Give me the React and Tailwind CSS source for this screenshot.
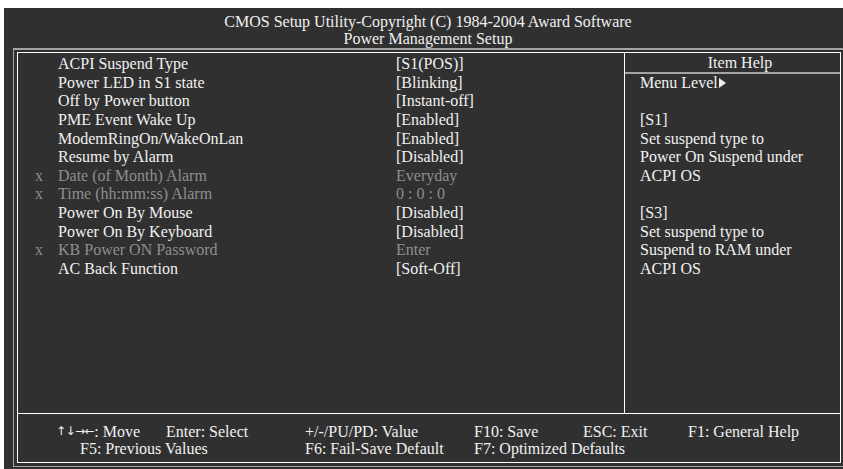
import React from 'react';

const items = [
  { label: 'ACPI Suspend Type', value: '[S1(POS)]' },
  { label: 'Power LED in S1 state', value: '[Blinking]' },
  { label: 'Off by Power button', value: '[Instant-off]' },
  { label: 'PME Event Wake Up', value: '[Enabled]' },
  { label: 'ModemRingOn/WakeOnLan', value: '[Enabled]' },
  { label: 'Resume by Alarm', value: '[Disabled]' },
  { label: 'Date (of Month) Alarm', value: 'Everyday', off: true },
  { label: 'Time (hh:mm:ss) Alarm', value: '0 : 0 : 0', off: true },
  { label: 'Power On By Mouse', value: '[Disabled]' },
  { label: 'Power On By Keyboard', value: '[Disabled]' },
  { label: 'KB Power ON Password', value: 'Enter', off: true },
  { label: 'AC Back Function', value: '[Soft-Off]' },
];

const helpLines = [
  'menu',
  '',
  '[S1]',
  'Set suspend type to',
  'Power On Suspend under',
  'ACPI OS',
  '',
  '[S3]',
  'Set suspend type to',
  'Suspend to RAM under',
  'ACPI OS',
];

const SettingRow = ({ item }) => (
  <div className={`flex h-[18.65px] leading-[18.65px] whitespace-nowrap ${item.off ? 'text-[#8e8e8e]' : ''}`}>
    <span className="w-[40px] pl-[17px]">{item.off ? 'x' : ''}</span>
    <span className="w-[338px]">{item.label}</span>
    <span>{item.value}</span>
  </div>
);

const App = () => {
  return (
    <div className="w-[843px] h-[469px] bg-white overflow-hidden font-['Liberation_Serif','Times_New_Roman',serif] text-[16px]">
      <div className="ml-[4px] mt-[8px] w-[841px] h-[461px] bg-[#303030] text-[#f0f0f0]">
        {/* title */}
        <div className="h-[40px] pt-[5px] pl-[7px] text-center leading-[17px]">
          <div>CMOS Setup Utility-Copyright (C) 1984-2004 Award Software</div>
          <div>Power Management Setup</div>
        </div>

        {/* double frame */}
        <div className="ml-[9px] w-[832px] h-[419px] border-x border-b border-t-2 border-[#a4a4a4] pt-[2px] px-[3px]">
          <div className="h-[411px] border border-white flex flex-col">
            <div className="flex h-[360px]">
              <div className="w-[607px] border-r border-white pt-[2px]">
                {items.map((item) => (
                  <SettingRow key={item.label} item={item} />
                ))}
              </div>
              <div className="flex-1 pt-[2px]">
                <div className="h-[18.65px] border-b-2 border-[#a4a4a4] pl-[15px] text-center leading-[16.65px]">
                  Item Help
                </div>
                {helpLines.map((line, i) => (
                  <div key={i} className="h-[18.65px] leading-[18.65px] pl-[15px] whitespace-nowrap">
                    {line === 'menu' ? (
                      <span className="flex items-center">
                        Menu Level
                        <svg width="7" height="10" viewBox="0 0 7 10" className="ml-[1px]">
                          <path d="M0 0 L7 5 L0 10 Z" fill="#f0f0f0" />
                        </svg>
                      </span>
                    ) : (
                      line
                    )}
                  </div>
                ))}
              </div>
            </div>

            {/* key legend */}
            <div className="flex-1 border-t border-white pt-[9px] leading-[17px] whitespace-nowrap">
              <div className="flex pl-[38px]">
                <span className="w-[110px] flex items-center">
                  <span className="font-['DejaVu_Sans',sans-serif] text-[12px] leading-[17px] tracking-[-0.5px]">↑↓→←</span>
                  <span>: Move</span>
                </span>
                <span className="w-[139px]">Enter: Select</span>
                <span className="w-[169px]">+/-/PU/PD: Value</span>
                <span className="w-[109px]">F10: Save</span>
                <span className="w-[105px]">ESC: Exit</span>
                <span>F1: General Help</span>
              </div>
              <div className="flex pl-[62px]">
                <span className="w-[225px]">F5: Previous Values</span>
                <span className="w-[169px]">F6: Fail-Save Default</span>
                <span>F7: Optimized Defaults</span>
              </div>
            </div>
          </div>
        </div>
      </div>
    </div>
  );
};

export default App;
